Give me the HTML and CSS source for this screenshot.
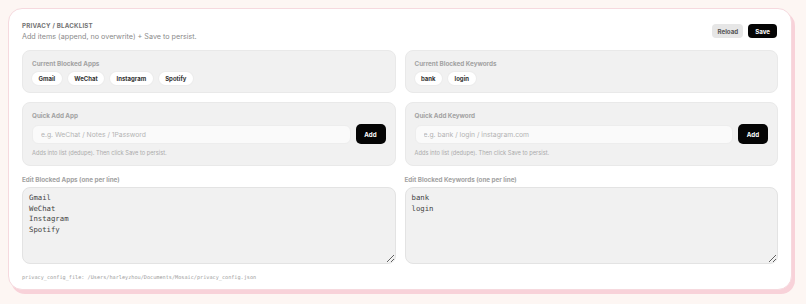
FILE: index.html
```html
<!DOCTYPE html>
<html>
<head>
	<title>Privacy / Blacklist</title>
	<link rel="stylesheet" href="styles.css">
</head>
<body>
	<div class="card">
		<div class="header">
			<div>
				<div class="title">Privacy / Blacklist</div>
				<div class="subtitle">Add items (append, no overwrite) + Save to persist.</div>
			</div>
			<div class="actions">
				<button type="button" class="btn btn-light">Reload</button>
				<button type="button" class="btn btn-dark btn-save">Save</button>
			</div>
		</div>

		<div class="grid">
			<div class="box">
				<div class="label">Current Blocked Apps</div>
				<div class="chips">
					<span class="chip">Gmail</span>
					<span class="chip">WeChat</span>
					<span class="chip">Instagram</span>
					<span class="chip">Spotify</span>
				</div>
			</div>
			<div class="box">
				<div class="label">Current Blocked Keywords</div>
				<div class="chips">
					<span class="chip">bank</span>
					<span class="chip">login</span>
				</div>
			</div>

			<div class="box">
				<div class="label">Quick Add App</div>
				<div class="add-row">
					<input type="text" class="field" placeholder="e.g. WeChat / Notes / 1Password">
					<button type="button" class="btn btn-dark btn-add">Add</button>
				</div>
				<div class="hint">Adds into list (dedupe). Then click Save to persist.</div>
			</div>
			<div class="box">
				<div class="label">Quick Add Keyword</div>
				<div class="add-row">
					<input type="text" class="field" placeholder="e.g. bank / login / instagram.com">
					<button type="button" class="btn btn-dark btn-add">Add</button>
				</div>
				<div class="hint">Adds into list (dedupe). Then click Save to persist.</div>
			</div>

			<div class="edit">
				<div class="label">Edit Blocked Apps (one per line)</div>
				<textarea class="list">Gmail
WeChat
Instagram
Spotify</textarea>
			</div>
			<div class="edit">
				<div class="label">Edit Blocked Keywords (one per line)</div>
				<textarea class="list">bank
login</textarea>
			</div>
		</div>

		<div class="footer">privacy_config_file: /Users/harleyzhou/Documents/Mosaic/privacy_config.json</div>
	</div>
</body>
</html>
```

FILE: styles.css
```css
body {
	margin: 0;
	padding: 8px;
	background-color: #fdf6f3;
	font-family: Inter, "Noto Sans", sans-serif;
}
.card {
	box-sizing: border-box;
	width: 784px;
	height: 282px;
	padding: 12px 13px 13px;
	background-color: white;
	border: 1px solid #f6d9de;
	border-radius: 14px;
	box-shadow: 3px 4px 0 #f8d2d9;
}
.header {
	display: flex;
	justify-content: space-between;
	align-items: flex-start;
	height: 29px;
}
.title {
	font-size: 6.2px;
	font-weight: 700;
	text-transform: uppercase;
	letter-spacing: 0.2px;
	color: #737373;
	line-height: 9px;
}
.subtitle {
	font-size: 7.2px;
	color: #8a8a8a;
	line-height: 11px;
	margin-top: 1px;
}
.actions {
	display: flex;
	gap: 5px;
	margin-top: 3px;
	margin-right: 1px;
}
.btn {
	font-family: Inter, "Noto Sans", sans-serif;
	font-size: 6.2px;
	font-weight: 700;
	height: 14px;
	padding: 0 5px;
	border: none;
	border-radius: 4px;
	cursor: pointer;
}
.btn-light {
	background-color: #e6e6e6;
	color: #555;
}
.btn-dark {
	background-color: #050505;
	color: white;
}
.btn-save {
	padding: 0 7px;
}
.grid {
	display: grid;
	grid-template-columns: 1fr 1fr;
	column-gap: 9px;
	row-gap: 9px;
}
.box {
	background-color: #f1f1f1;
	border: 1px solid #e9e9e9;
	border-radius: 8px;
	padding: 8px 9px 7px;
}
.label {
	font-size: 6.3px;
	font-weight: 700;
	color: #a2a2a2;
	line-height: 10px;
}
.chips {
	display: flex;
	gap: 6px;
	margin-top: 3px;
}
.chip {
	background-color: white;
	border-radius: 7px;
	font-size: 6px;
	font-weight: 700;
	color: #333;
	line-height: 13px;
	padding: 0 6.5px;
	box-shadow: 0 0 0 1px #ececec;
}
.add-row {
	display: flex;
	gap: 5px;
	margin-top: 3px;
	height: 20px;
	align-items: center;
}
.field {
	flex: 1;
	min-width: 0;
	box-sizing: border-box;
	height: 19px;
	padding: 0 8px;
	background-color: #fafafa;
	border: 1px solid #ededed;
	border-radius: 6px;
	font-family: Inter, "Noto Sans", sans-serif;
	font-size: 6.8px;
	color: #333;
	outline: none;
}
.field::placeholder {
	color: #b4b4b4;
}
.btn-add {
	width: 30px;
	height: 20px;
	padding: 0;
	border-radius: 5px;
}
.hint {
	font-size: 5.7px;
	color: #ababab;
	line-height: 8px;
	margin-top: 5px;
	margin-bottom: 1px;
}
.edit .label {
	margin-bottom: 2px;
}
.list {
	display: block;
	box-sizing: border-box;
	width: 100%;
	height: 77px;
	margin: 0;
	padding: 5px 6px;
	background-color: #f1f1f1;
	border: 1px solid #e3e3e3;
	border-radius: 8px;
	font-family: "DejaVu Sans Mono", monospace;
	font-size: 7.3px;
	line-height: 10.5px;
	color: #444;
	outline: none;
	resize: vertical;
}
.footer {
	margin-top: 10px;
	font-family: "DejaVu Sans Mono", monospace;
	font-size: 5.2px;
	color: #9c9c9c;
}
```
